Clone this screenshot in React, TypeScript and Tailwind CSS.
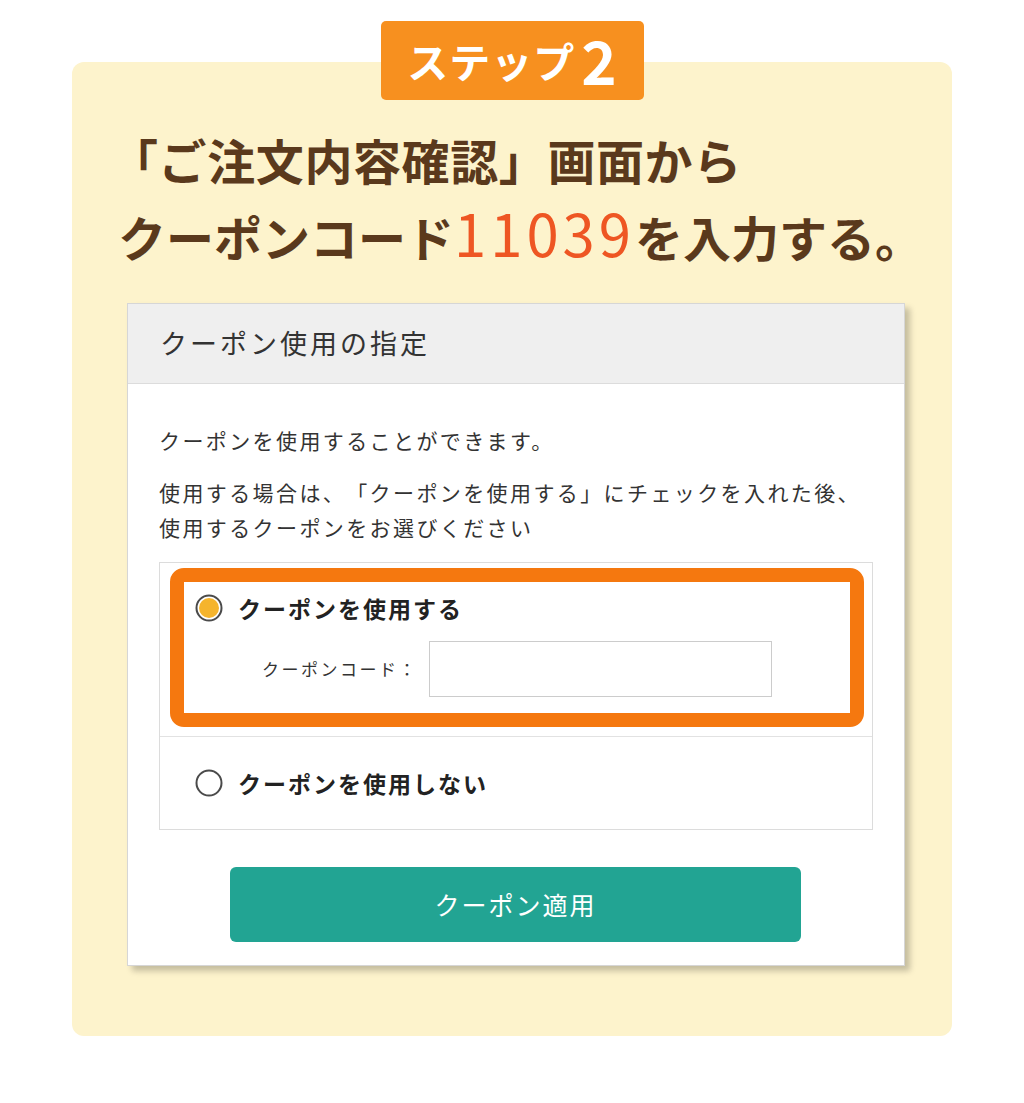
import React from 'react'

const font = "font-['Noto_Sans_CJK_JP','Noto_Sans',sans-serif]"

function Radio({ checked }: { checked?: boolean }) {
  return (
    <svg width="28" height="28" viewBox="0 0 28 28" className="shrink-0">
      <circle cx="14" cy="14" r="12.5" fill="#fff" stroke="#4a4a4a" strokeWidth="2" />
      {checked && <circle cx="14" cy="14" r="10" fill="#f5b42c" />}
    </svg>
  )
}

export default function App() {
  return (
    <div className={`${font} bg-white min-h-[1103px] pt-[62px] [text-spacing-trim:space-all]`}>
      <div className="flow-root mx-[72px] bg-[#fdf3cc] rounded-[12px] pb-[70px]">
        {/* step badge */}
        <div className="mx-auto -mt-[41px] w-[263px] h-[79px] bg-[#f7901f] rounded-[5px] flex items-center justify-center text-white font-bold">
          <span className="text-[41px] leading-none tracking-[1px]">ステップ</span>
          <span className="text-[60px] leading-none ml-[6px] -mt-[3px]">2</span>
        </div>

        {/* heading */}
        <div className="mt-[21px] pl-[46px] text-[#5a391c] font-bold text-[48px] leading-[77px]">
          <div className="-ml-[8px] tracking-[0.6px]">「ご注文内容確認」画面から</div>
          <div>
            クーポンコード<span className="text-[#ee5623] font-normal text-[58px] leading-none tracking-[4px]">11039</span>を入力する。
          </div>
        </div>

        {/* card */}
        <div className="mt-[28px] ml-[55px] w-[778px] bg-white border border-[#d6d6d6] shadow-[5px_5px_6px_rgba(0,0,0,0.22)]">
          <div className="h-[80px] bg-[#efefef] border-b border-[#dcdcdc] flex items-center pl-[32px]">
            <span className="text-[27px] tracking-[3px] text-[#333]">クーポン使用の指定</span>
          </div>

          <div className="px-[31px] pt-[39px] pb-[23px]">
            <p className="text-[21px] leading-[35px] tracking-[2.4px] text-[#333]">クーポンを使用することができます。</p>
            <p className="mt-[17px] text-[21px] leading-[35px] tracking-[2.4px] text-[#333]">
              使用する場合は、「クーポンを使用する」にチェックを入れた後、
              <br />
              使用するクーポンをお選びください
            </p>

            {/* options */}
            <div className="mt-[17px] border border-[#dcdcdc]">
              <div className="pt-[5px] pl-[10px] pr-[8px] pb-[9px] border-b border-[#e2e2e2]">
                <div className="border-[14px] border-[#f5780f] rounded-[14px] pl-[11px] pt-[8px] pb-[16px]">
                  <div className="flex items-center h-[36px]">
                    <Radio checked />
                    <span className="ml-[15px] text-[23px] font-bold tracking-[2px] text-[#222]">クーポンを使用する</span>
                  </div>
                  <div className="flex items-center mt-[15px]">
                    <span className="ml-[67px] w-[167px] text-[17px] tracking-[2.5px] text-[#333]">クーポンコード：</span>
                    <div className="w-[343px] h-[56px] border border-[#cccccc] bg-white" />
                  </div>
                </div>
              </div>
              <div className="h-[92px] flex items-center pl-[35px]">
                <Radio />
                <span className="ml-[15px] text-[23px] font-bold tracking-[2px] text-[#222]">クーポンを使用しない</span>
              </div>
            </div>

            <button className="mt-[37px] ml-[71px] w-[571px] h-[75px] bg-[#22a493] rounded-[6px] text-white text-[25px] tracking-[2px] flex items-center justify-center">
              クーポン適用
            </button>
          </div>
        </div>
      </div>
    </div>
  )
}
